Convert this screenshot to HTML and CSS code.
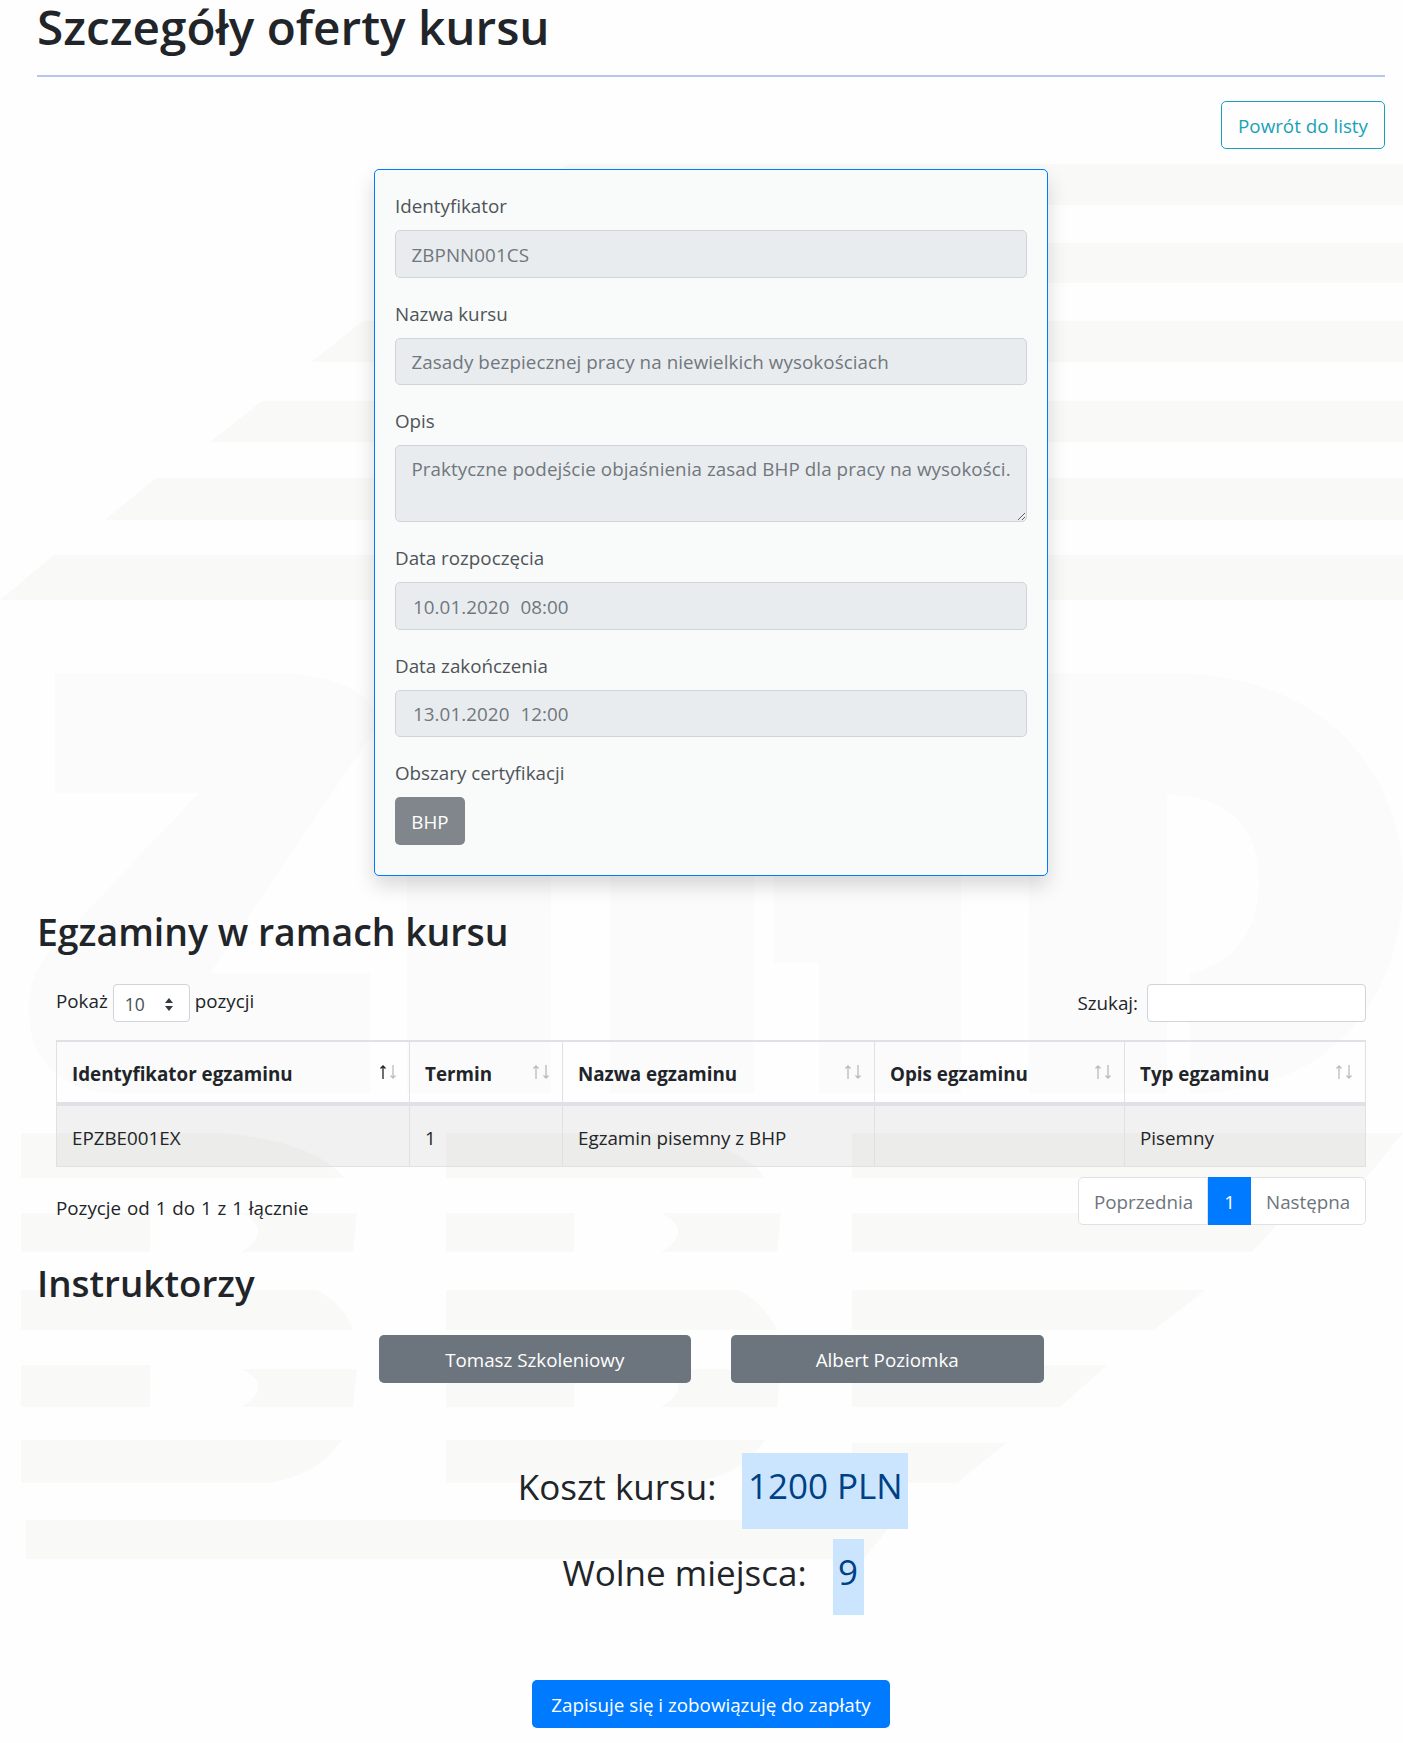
FILE: index.html
```html
<!DOCTYPE html>
<html lang="pl">
	<head>
		<meta charset="UTF-8">
		<title>Szczegóły oferty kursu</title>
		<link rel="stylesheet" href="styles.css">
	</head>
	<body>
		<!-- znak wodny w tle -->
		<svg class="watermark" width="1403" height="1743" viewBox="0 0 1403 1743" aria-hidden="true">
			<g class="wm-stripes">
				<polygon points="568,164 1403,164 1403,205 515,205"/>
				<polygon points="465,243 1403,243 1403,283 415,283"/>
				<polygon points="363,321 1403,321 1403,362 311,362"/>
				<polygon points="262,401 1403,401 1403,442 210,442"/>
				<polygon points="156,478 1403,478 1403,520 105,520"/>
				<polygon points="54,555 1403,555 1403,600 0,600"/>
			</g>
			<g class="wm-letters">
				<path d="M55 673H270C345 673 385 700 375 730L210 973H370V1093H120C50 1093 29 1050 29 1010C29 985 35 970 50 950L199 793H55Z"/>
				<rect x="407" y="673" width="144" height="420"/>
				<rect x="610" y="673" width="144" height="420"/>
				<path d="M774 673H961V1093H819V963H774Z"/>
				<path d="M1029 673H1170C1330 673 1403 780 1403 880C1403 1000 1330 1093 1190 1093V973C1245 960 1259 920 1259 880C1259 830 1230 795 1167 795V1093H1029Z"/>
			</g>
			<g class="wm-stripes">
				<path d="M21 1133H223C290 1140 325 1155 344 1178H21Z"/>
				<path d="M446 1133H660C710 1140 750 1155 765 1178H446Z"/>
				<polygon points="852,1133 1403,1133 1366,1178 852,1178"/>
				<path d="M21 1213H150V1252H21ZM241 1213H357L353 1252H241C262 1240 266 1225 241 1213Z"/>
				<path d="M446 1213H574V1252H446ZM661 1213H781L777 1252H661C682 1240 686 1225 661 1213Z"/>
				<polygon points="852,1213 1288,1213 1252,1252 852,1252"/>
				<path d="M21 1290H317C335 1300 348 1315 353 1330H21Z"/>
				<path d="M446 1290H739C757 1300 770 1315 777 1330H446Z"/>
				<polygon points="852,1290 1205,1290 1154,1330 852,1330"/>
				<path d="M21 1365H150V1407H21ZM241 1369H357L353 1407H241C262 1395 266 1380 241 1369Z"/>
				<path d="M446 1369H574V1407H446ZM661 1369H781L777 1407H661C682 1395 686 1380 661 1369Z"/>
				<polygon points="852,1365 1107,1365 1060,1407 852,1407"/>
				<path d="M21 1440H342C325 1465 300 1478 268 1483H21Z"/>
				<path d="M446 1440H765C748 1465 725 1478 690 1483H446Z"/>
				<polygon points="852,1443 1006,1443 957,1483 852,1483"/>
				<polygon points="26,1520 895,1520 864,1559 26,1559"/>
			</g>
		</svg>

		<div class="page">
			<h1 class="page-title">Szczegóły oferty kursu</h1>
			<hr class="title-line">

			<div class="back-row">
				<a class="btn btn-outline-info" href="#">Powrót do listy</a>
			</div>

			<form class="offer-card">
				<div class="field">
					<label>Identyfikator</label>
					<input class="control" type="text" value="ZBPNN001CS" readonly>
				</div>
				<div class="field">
					<label>Nazwa kursu</label>
					<input class="control" type="text" value="Zasady bezpiecznej pracy na niewielkich wysokościach" readonly>
				</div>
				<div class="field">
					<label>Opis</label>
					<textarea class="control" rows="2" readonly>Praktyczne podejście objaśnienia zasad BHP dla pracy na wysokości.</textarea>
				</div>
				<div class="field">
					<label>Data rozpoczęcia</label>
					<input class="control date" type="text" value="10.01.2020 08:00" readonly>
				</div>
				<div class="field">
					<label>Data zakończenia</label>
					<input class="control date" type="text" value="13.01.2020 12:00" readonly>
				</div>
				<div class="field">
					<label>Obszary certyfikacji</label>
					<button class="btn btn-area" type="button" disabled>BHP</button>
				</div>
			</form>

			<h2 class="section-title exams-title">Egzaminy w ramach kursu</h2>

			<div class="datatable">
				<div class="dt-top">
					<label class="dt-length">Pokaż
						<span class="fake-select">10
							<svg width="8" height="13" viewBox="0 0 8 13"><path d="M4 0 8 5H0ZM4 13 0 8H8Z"/></svg>
						</span>
						pozycji</label>
					<label class="dt-search">Szukaj: <input type="search"></label>
				</div>

				<table class="exams">
					<thead>
						<tr>
							<th class="col-id sorted">Identyfikator egzaminu
								<svg class="sort-icon" width="16" height="14" viewBox="0 0 16 14"><path class="sort-up" d="M3 14V1M.5 3.5 3 1l2.5 2.5"/><path class="sort-down" d="M13 0V13M10.5 10.5 13 13l2.5-2.5"/></svg>
							</th>
							<th class="col-term">Termin
								<svg class="sort-icon" width="16" height="14" viewBox="0 0 16 14"><path class="sort-up" d="M3 14V1M.5 3.5 3 1l2.5 2.5"/><path class="sort-down" d="M13 0V13M10.5 10.5 13 13l2.5-2.5"/></svg>
							</th>
							<th class="col-name">Nazwa egzaminu
								<svg class="sort-icon" width="16" height="14" viewBox="0 0 16 14"><path class="sort-up" d="M3 14V1M.5 3.5 3 1l2.5 2.5"/><path class="sort-down" d="M13 0V13M10.5 10.5 13 13l2.5-2.5"/></svg>
							</th>
							<th class="col-desc">Opis egzaminu
								<svg class="sort-icon" width="16" height="14" viewBox="0 0 16 14"><path class="sort-up" d="M3 14V1M.5 3.5 3 1l2.5 2.5"/><path class="sort-down" d="M13 0V13M10.5 10.5 13 13l2.5-2.5"/></svg>
							</th>
							<th class="col-type">Typ egzaminu
								<svg class="sort-icon" width="16" height="14" viewBox="0 0 16 14"><path class="sort-up" d="M3 14V1M.5 3.5 3 1l2.5 2.5"/><path class="sort-down" d="M13 0V13M10.5 10.5 13 13l2.5-2.5"/></svg>
							</th>
						</tr>
					</thead>
					<tbody>
						<tr>
							<td>EPZBE001EX</td>
							<td>1</td>
							<td>Egzamin pisemny z BHP</td>
							<td></td>
							<td>Pisemny</td>
						</tr>
					</tbody>
				</table>

				<div class="dt-bottom">
					<div class="dt-info">Pozycje od 1 do 1 z 1 łącznie</div>
					<ul class="pager">
						<li class="pg-prev">Poprzednia</li>
						<li class="pg-num">1</li>
						<li class="pg-next">Następna</li>
					</ul>
				</div>
			</div>

			<h2 class="section-title teachers-title">Instruktorzy</h2>
			<div class="teachers">
				<a class="btn btn-teacher" href="#">Tomasz Szkoleniowy</a>
				<a class="btn btn-teacher" href="#">Albert Poziomka</a>
			</div>

			<div class="price-row cost-row">
				<span class="price-label">Koszt kursu:</span>
				<span class="price-value">1200 PLN</span>
			</div>
			<div class="price-row seats-row">
				<span class="price-label">Wolne miejsca:</span>
				<span class="price-value">9</span>
			</div>

			<div class="signup-row">
				<button class="btn btn-signup" type="button">Zapisuje się i zobowiązuję do zapłaty</button>
			</div>
		</div>
	</body>
</html>
```
FILE: styles.css
```css
*{
	box-sizing: border-box;
}
html,body{
	margin: 0;
	padding: 0;
}
body{
	position: relative;
	width: 1403px;
	height: 1743px;
	overflow: hidden;
	background: #fefefe;
	color: #212529;
	font-family: "Open Sans", "Noto Sans", sans-serif;
	font-size: 18.8px;
	line-height: 30px;
}
.watermark{
	position: absolute;
	left: 0;
	top: 0;
	z-index: -1;
}
.wm-stripes{
	fill: #f9f9f7;
}
.wm-letters{
	fill: #fbfbfb;
}
.page{
	padding: 0 18px 16px 37px;
}
.page-title{
	height: 57px;
	margin: 0;
	font-size: 47.7px;
	font-weight: 600;
	line-height: 54px;
}
.title-line{
	height: 2px;
	margin: 18px 0 0;
	border: 0;
	background: #b8c5ec;
}
.back-row{
	display: flex;
	justify-content: flex-end;
	margin-top: 24px;
}
.btn{
	display: inline-block;
	height: 48px;
	padding: 9px 15px 7px;
	border: 1px solid transparent;
	border-radius: 5px;
	font-family: inherit;
	font-size: 18.8px;
	line-height: 30px;
	text-align: center;
	text-decoration: none;
}
.btn-outline-info{
	width: 164px;
	padding: 9px 0 7px;
	border-color: #17a2b8;
	color: #17a2b8;
}
.offer-card{
	width: 674px;
	margin: 20px auto 0;
	padding: 20px 20px 10px;
	border: 1px solid #007bff;
	border-radius: 5px;
	background: #f9fafa;
	box-shadow: 0 10px 20px rgba(0,0,0,.15);
	color: #4e5459;
}
.field{
	margin-bottom: 20px;
}
.field label{
	display: block;
	height: 30px;
	margin-bottom: 10px;
	line-height: 32px;
}
.control{
	display: block;
	width: 100%;
	height: 47.5px;
	padding: 8px 15px 6px 15.5px;
	border: 1px solid #ced4da;
	border-radius: 5px;
	outline: none;
	background: #e9ecef;
	color: #70777d;
	font-family: inherit;
	font-size: 18.8px;
	line-height: 30px;
	letter-spacing: .07px;
}
textarea.control{
	height: 77px;
}
.date{
	padding-left: 17px;
	word-spacing: 6px;
}
.btn-area{
	display: block;
	width: 70px;
	padding: 9px 0 7px;
	background: #80868c;
	color: #fff;
}
.section-title{
	height: 48px;
	margin: 0;
	font-size: 37.4px;
	font-weight: 600;
	line-height: 48px;
}
.exams-title{
	margin-top: 32px;
}
.datatable{
	margin: 28px 19px 0;
}
.dt-top{
	display: flex;
	justify-content: space-between;
	margin-bottom: 18px;
}
.dt-length{
	display: flex;
	align-items: center;
	gap: 5px;
	height: 38px;
	padding-bottom: 5px;
	word-spacing: 1px;
}
.fake-select{
	display: flex;
	align-items: center;
	justify-content: space-between;
	width: 77px;
	height: 38px;
	margin-bottom: -5px;
	padding: 2px 16px 0 11px;
	border: 1px solid #ced4da;
	border-radius: 4px;
	background: #fff;
	color: #495057;
	font-size: 17.5px;
}
.fake-select svg{
	fill: #343a40;
}
.dt-search{
	display: flex;
	align-items: center;
	gap: 9px;
}
.dt-search input{
	width: 219px;
	height: 38px;
	border: 1px solid #ced4da;
	border-radius: 4px;
	background: #fff;
	outline: none;
}
.exams{
	width: 1310px;
	border-collapse: separate;
	border-spacing: 0;
	table-layout: fixed;
}
.exams th{
	position: relative;
	height: 66px;
	padding: 4px 15px 0;
	border-top: 2px solid #dee2e6;
	border-left: 1px solid #dee2e6;
	border-bottom: 4px solid #dee2e6;
	text-align: left;
	font-weight: 700;
}
.exams td{
	height: 61px;
	padding: 3px 15px 0;
	border-left: 1px solid #dee2e6;
	border-bottom: 1px solid #dee2e6;
	background: rgba(0,0,0,.05);
}
.exams th:last-child,
.exams td:last-child{
	border-right: 1px solid #dee2e6;
}
.sort-icon{
	position: absolute;
	top: 23px;
	right: 13px;
	fill: none;
	stroke: #212529;
	stroke-width: 1.3;
}
.sort-up,
.sort-down{
	opacity: .3;
}
.sorted .sort-up{
	opacity: 1;
}
.col-id{
	width: 353px;
}
.col-term{
	width: 153px;
}
.col-name{
	width: 312px;
}
.col-desc{
	width: 250px;
}
.col-type{
	width: 242px;
}
.dt-bottom{
	display: flex;
	justify-content: space-between;
	margin-top: 10px;
}
.dt-info{
	padding-top: 16px;
	word-spacing: 1px;
}
.pager{
	display: flex;
	height: 48px;
	margin: 0;
	padding: 0;
	list-style: none;
	color: #6c757d;
}
.pager li{
	padding: 9px 15px 7px;
	border: 1px solid #dee2e6;
	background: #fff;
}
.pg-prev{
	width: 130px;
	border-radius: 5px 0 0 5px;
	white-space: nowrap;
}
.pager .pg-num{
	width: 43px;
	border-color: #007bff;
	background: #007bff;
	color: #fff;
	text-align: center;
}
.pager .pg-next{
	width: 115px;
	padding-left: 15px;
	border-radius: 0 5px 5px 0;
	border-left: 0;
	white-space: nowrap;
}
.teachers-title{
	margin-top: 35px;
	font-size: 36.8px;
	line-height: 46px;
}
.teachers{
	display: flex;
	justify-content: center;
	gap: 40px;
	margin-top: 27px;
}
.btn-teacher{
	width: 312.5px;
	background: #6c757d;
	color: #fff;
}
.price-row{
	display: flex;
	align-items: center;
	justify-content: center;
	gap: 26px;
	height: 76px;
	padding-left: 4px;
	font-size: 35px;
}
.cost-row{
	margin-top: 70px;
}
.seats-row{
	margin-top: 10px;
}
.price-label{
	margin-bottom: 8px;
}
.price-value{
	height: 76px;
	padding: 0 5.5px;
	background: #cce5ff;
	color: #004085;
	line-height: 66px;
}
.signup-row{
	display: flex;
	justify-content: center;
	margin-top: 65px;
}
.btn-signup{
	width: 358px;
	height: 47.5px;
	padding: 8px 0 6px;
	background: #007bff;
	color: #fff;
}
```
